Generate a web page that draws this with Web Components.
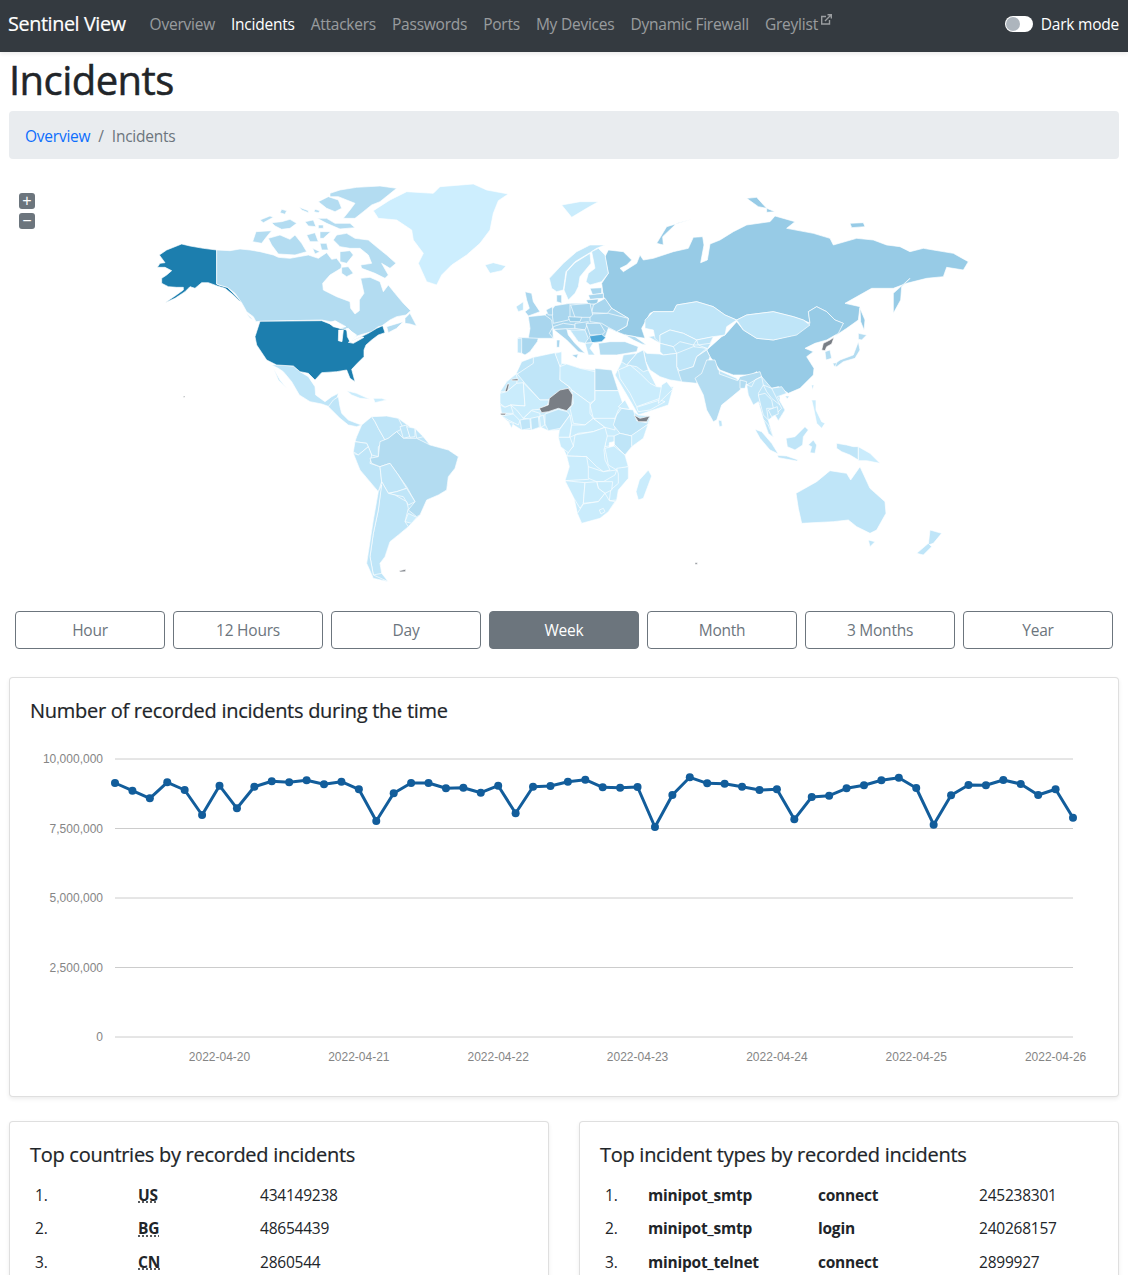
<!DOCTYPE html>
<html lang="en">
<head>
<meta charset="utf-8">
<title>Sentinel View - Incidents</title>
<style>
  html, body { margin: 0; height: 1275px; overflow: hidden; background: #fff; }
  body { font-family: "Open Sans", "Noto Sans", sans-serif; color: #212529; }
  main-area { display: block; padding: 3px 9px 0; }
</style>
</head>
<body>
<app-navbar active="Incidents"></app-navbar>
<main-area>
  <page-title>Incidents</page-title>
  <bread-crumb current="Incidents"></bread-crumb>
  <world-map></world-map>
  <range-buttons active="Week"></range-buttons>
  <panel-card heading="Number of recorded incidents during the time">
    <line-chart></line-chart>
  </panel-card>
  <two-cols>
    <panel-card heading="Top countries by recorded incidents">
      <top-list cols="103px 122px 1fr" rows='[["1.","*US","434149238"],["2.","*BG","48654439"],["3.","*CN","2860544"]]'></top-list>
    </panel-card>
    <panel-card heading="Top incident types by recorded incidents">
      <top-list cols="43px 170px 161px 1fr" rows='[["1.","!minipot_smtp","!connect","245238301"],["2.","!minipot_smtp","!login","240268157"],["3.","!minipot_telnet","!connect","2899927"]]'></top-list>
    </panel-card>
  </two-cols>
</main-area>

<script>
// Open Sans runs wider than the reference face, pull it in a little
const TEXT_FIT = 'font-size: 15.5px; letter-spacing: -0.015em;';

class AppNavbar extends HTMLElement {
  connectedCallback() {
    const links = ['Overview', 'Incidents', 'Attackers', 'Passwords', 'Ports', 'My Devices', 'Dynamic Firewall', 'Greylist'];
    const active = this.getAttribute('active');
    const external = `<svg width="11" height="11" viewBox="0 0 11 11" fill="none" stroke="currentColor" stroke-width="1.4"><path d="M8.5 6v4h-7.800V2.500h4.300"/><path d="M4 7l6-6M6.500 .8h3.800v3.800"/></svg>`;
    this.attachShadow({ mode: 'open' }).innerHTML = `
      <style>
        :host { display: flex; align-items: center; box-sizing: border-box; height: 52px; padding: 0 9px 5px 8px; background: #343a40;
          box-shadow: 0 2px 4px rgba(0,0,0,.08); position: relative; ${TEXT_FIT} }
        .brand { font-size: 19.8px; letter-spacing: -.02em; color: #fff; margin-right: 16px; -webkit-text-stroke: .2px #fff; }
        nav { display: flex; flex: 1; }
        a { color: rgba(255,255,255,.5); padding: 0 8px; text-decoration: none; white-space: nowrap; }
        a.on { color: #fff; }
        a svg { vertical-align: 5px; margin-left: 3px; }
        .toggle { display: flex; align-items: center; gap: 8px; color: #fff; }
        .track { width: 28px; height: 16px; border-radius: 8px; background: #fff; display: flex; align-items: center; padding-left: 1px; box-sizing: border-box; }
        .knob { width: 14px; height: 14px; border-radius: 50%; background: #adb5bd; }
      </style>
      <span class="brand">Sentinel View</span>
      <nav>${links.map(l => `<a href="#" class="${l === active ? 'on' : ''}">${l}${l === 'Greylist' ? external : ''}</a>`).join('')}</nav>
      <label class="toggle"><span class="track"><span class="knob"></span></span>Dark mode</label>`;
  }
}

class PageTitle extends HTMLElement {
  connectedCallback() {
    this.attachShadow({ mode: 'open' }).innerHTML = `
      <style>
        :host { display: block; height: 48px; margin-bottom: 8px; }
        h1 { margin: 0; font-size: 40px; line-height: 50px; font-weight: 400; color: #212529; letter-spacing: -.014em; -webkit-text-stroke: .5px #212529; }
      </style>
      <h1><slot></slot></h1>`;
  }
}

class BreadCrumb extends HTMLElement {
  connectedCallback() {
    this.attachShadow({ mode: 'open' }).innerHTML = `
      <style>
        :host { display: flex; align-items: center; box-sizing: border-box; height: 48px; padding: 1px 16px 0; background: #e9ecef; border-radius: 4px;
          color: #6c757d; ${TEXT_FIT} }
        a { color: #0d6efd; text-decoration: none; }
        i { font-style: normal; padding: 0 8px; }
      </style>
      <a href="#">Overview</a><i>/</i><span>${this.getAttribute('current')}</span>`;
  }
}

// Colours of the choropleth, light to dark
const C = { g: '#cdeefe', l: '#caecfc', m: '#bfe5f8', d: '#b3dcf1', e: '#a9d6ee', f: '#9ccfe9', r: '#97cbe6', b: '#4fa9d9', u: '#1c7eae', x: '#797e85' };

// Each region is traced in 3x crop coordinates, ox/oy is the crop origin on the page.
// A leading "_" on the colour key draws a base with no border under its countries, "w" is a lake.
const REGIONS = [
  { ox: 140, oy: 180, shapes: [
    ['u', '230,210 230,312 240,316 262,322 285,345 305,365 298,362 280,345 255,325 232,318 205,308 185,308 165,325 150,320 135,335 105,355 75,368 105,348 130,330 130,322 110,322 85,320 65,310 65,295 80,285 95,272 75,262 52,262 60,250 75,248 58,225 80,210 125,192 150,198 190,205'],
    ['g', '700,92 750,60 800,35 880,40 900,20 1000,12 1040,30 1105,42 1075,62 1060,100 1050,150 1020,190 980,225 935,255 905,285 890,315 860,305 835,250 850,220 820,180 815,150 770,120 715,115'],
    ['l', '1035,255 1060,248 1098,258 1085,272 1050,280'],
    ['m', '395,555 410,555 460,558 480,575 505,590 525,620 527,645 555,665 575,650 595,640 590,660 568,680 545,672 510,665 478,645 455,605 430,575 415,565'],
    ['m', '400,565 420,600 440,625 415,600'],
    ['m', '565,680 580,660 595,650 600,680 605,700 625,720 650,730 665,735 650,740 625,735 600,715 575,690'],
    ['l', '620,632 650,640 690,658 660,655 635,645'],
    ['l', '700,655 725,655 740,660 705,668'],
    ['_m', '665,735 695,710 775,715 850,770 870,795 925,810 955,830 945,865 925,890 920,930 895,945 860,960 840,1005 815,1030 805,1040 775,1065 750,1085 735,1130 720,1150 725,1180 745,1205 700,1195 680,1150 690,1085 700,1020 715,935 660,870 640,820 645,785 650,770'],
    ['m', '665,735 695,710 705,725 715,745 735,780 725,790 715,800 715,830 695,825 680,790 645,785 650,770'],
    ['m', '695,710 740,708 775,715 790,745 770,755 745,775 735,780 715,745 705,725'],
    ['m', '780,740 800,735 810,770 790,775'],
    ['m', '800,740 825,745 825,770 810,772'],
    ['m', '825,745 850,770 830,775'],
    ['m', '645,785 680,790 685,800 655,825 640,815'],
    ['m', '655,825 685,800 695,825 690,850 720,860 725,905 715,935 660,870 640,820'],
    ['d', '690,835 715,830 720,785 745,775 770,755 790,775 830,775 860,790 870,795 925,810 955,830 945,865 925,890 920,930 895,945 860,960 840,1005 830,1010 805,990 825,965 800,920 775,885 750,850 720,860 695,850'],
    ['m', '720,860 750,850 775,885 800,925 770,935 745,940 725,905'],
    ['m', '745,940 770,935 800,925 825,965 805,975 790,950 765,945'],
    ['l', '805,1000 830,1012 815,1030 795,1025'],
    ['m', '725,905 745,940 765,945 800,965 805,985 795,1025 805,1040 775,1065 750,1085 735,1130 720,1150 725,1180 700,1185 690,1130 700,1060 715,990'],
    ['m', '715,935 725,915 715,990 700,1060 690,1130 700,1185 745,1205 700,1195 680,1150 690,1085 700,1020'],
    ['x', '778,1172 798,1168 796,1175 780,1176'],
    ['x', '130,648 135,648 135,652 130,652']
  ] },
  // canada and the contiguous states
  { ox: 240, oy: 180, shapes: [
    ['d', '-70,210 -30,212 0,207 30,210 60,215 100,225 115,232 150,235 205,225 235,235 260,218 275,238 290,235 305,255 303,265 270,285 248,310 250,330 290,350 330,365 332,385 345,402 358,392 358,360 372,340 362,295 390,292 420,305 430,335 445,315 465,340 490,370 512,392 498,405 470,410 450,420 425,438 415,440 395,455 370,462 345,470 335,480 340,460 325,445 310,450 290,425 270,425 245,420 60,424 48,425 40,410 20,395 5,368 -15,340 -38,322 -60,316 -70,312'],
    ['d', '300,215 330,212 340,225 320,250 300,245'],
    ['d', '270,40 300,30 350,22 420,18 470,25 445,45 420,65 395,75 370,95 345,115 310,115 330,90 345,70 320,60 295,50 270,50'],
    ['d', '235,65 265,50 295,60 305,85 285,95 260,85'],
    ['d', '232,115 260,115 285,130 330,130 345,143 300,147 260,130'],
    ['d', '225,88 240,92 235,98 222,95'],
    ['d', '178,82 205,92 205,98 185,90'],
    ['d', '125,88 140,92 135,103 120,98'],
    ['d', '60,120 90,108 100,112 70,128'],
    ['d', '95,128 125,125 150,118 170,130 150,145 125,148 105,138'],
    ['d', '195,125 220,120 228,140 205,138'],
    ['d', '235,135 250,135 250,145 235,145'],
    ['d', '48,155 95,152 80,170 65,190 38,185'],
    ['d', '85,175 120,165 150,178 165,165 185,190 200,215 165,225 115,222 95,195'],
    ['d', '200,165 225,158 235,185 210,185'],
    ['d', '240,155 272,155 250,175 240,175'],
    ['d', '240,190 260,190 265,210 245,210'],
    ['d', '218,205 240,215 225,222'],
    ['d', '280,180 290,165 320,160 345,175 385,180 415,205 440,225 468,250 450,265 425,250 445,285 435,295 405,280 365,265 362,255 395,250 385,225 360,205 330,205 300,200'],
    ['d', '305,262 325,260 340,280 320,290 305,280'],
    ['d', '495,415 510,400 530,438 510,432 495,430'],
    ['d', '440,440 490,425 470,445 445,458'],
    ['d', '18,398 40,420 30,415'],
    ['u', '60,424 245,422 270,432 300,445 320,450 330,470 330,485 360,472 385,460 410,445 428,437 435,458 415,465 395,480 378,495 372,510 372,530 352,550 335,568 345,605 330,595 320,570 290,575 245,578 225,600 205,580 180,575 160,558 110,555 80,540 50,495 45,470'],
    ['w', '268,430 285,422 318,440 300,445 280,440'],
    ['w', '296,450 310,450 306,485 295,482'],
    ['w', '320,445 350,465 335,480 330,485 322,470'],
    ['w', '325,487 365,470 372,472 340,490']
  ] },
  // russia, central asia and the near east
  { ox: 480, oy: 180, shapes: [
    ['r', '375,230 385,210 430,215 455,240 440,255 420,265 430,275 470,250 480,225 490,240 520,235 580,215 625,205 640,172 668,170 672,195 662,248 682,240 690,192 720,180 760,155 800,135 870,125 885,108 945,125 920,145 1000,160 1050,175 1060,195 1130,175 1180,180 1220,195 1260,200 1290,215 1330,205 1360,210 1420,220 1465,245 1450,270 1400,262 1390,290 1340,295 1280,310 1240,325 1175,325 1095,370 1140,380 1135,420 1100,445 1065,468 1090,430 1065,420 1040,395 1010,380 985,395 990,430 970,420 940,410 880,395 840,400 800,405 770,420 735,405 700,380 650,365 590,375 580,395 520,395 510,400 485,445 495,475 465,470 435,465 410,455 440,438 445,415 395,385 370,350 365,310 385,280'],
    ['r', '1240,340 1290,295 1265,320 1262,360 1240,400'],
    ['r', '1140,385 1155,420 1152,450 1142,425'],
    ['r', '530,190 560,140 636,118 590,130 548,170 550,195'],
    ['r', '800,55 830,52 860,85 835,80'],
    ['r', '860,85 885,95 860,97'],
    ['r', '1110,130 1150,128 1155,140 1115,143'],
    ['l', '245,75 300,65 355,65 320,85 275,112'],
    ['r', '680,510 725,470 735,465 770,425 790,450 830,475 880,480 940,465 985,430 990,430 985,395 1010,380 1040,395 1065,420 1090,430 1075,460 1040,480 1005,490 975,505 1000,515 980,530 1002,565 1000,585 960,625 925,640 895,620 875,625 845,615 845,590 830,575 815,585 760,585 720,570 690,530'],
    ['m', '770,420 800,405 840,400 880,395 940,410 970,420 990,435 950,465 880,480 830,475 790,450'],
    ['_m', '505,470 540,465 570,450 650,480 700,470 690,495 680,510 650,530 640,560 600,605 590,560 550,525 540,490'],
    ['m', '495,420 520,395 580,395 590,375 650,365 700,380 735,405 770,420 740,440 735,465 700,470 650,480 610,460 570,450 540,465 540,490 525,475 520,450 495,445'],
    ['m', '540,465 570,450 610,460 650,480 640,495 600,485 580,500 540,490'],
    ['m', '540,490 580,500 590,520 550,525 540,515'],
    ['m', '650,480 700,470 690,490 655,495'],
    ['m', '640,495 655,495 680,505 650,510'],
    ['m', '590,520 640,500 680,505 650,530 640,560 600,575 590,560'],
    ['d', '590,575 640,560 650,530 680,510 690,530 680,560 655,595 650,610 600,605'],
    ['m', '490,510 500,520 540,522 550,525 590,520 590,560 605,605 570,600 540,590 510,570 497,545'],
    ['m', '948,940 1010,905 1050,872 1100,880 1112,900 1140,860 1170,925 1215,965 1218,1000 1190,1050 1170,1060 1130,1040 1105,1020 1060,1025 965,1030 955,985'],
    ['m', '1165,1080 1185,1085 1170,1100'],
    ['m', '1350,1050 1385,1060 1360,1090 1345,1095'],
    ['m', '1345,1090 1310,1120 1330,1125 1355,1100'],
    ['_l', '425,545 430,525 470,520 490,510 497,545 505,570 530,620 580,620 565,675 475,705 455,670 405,585'],
    ['m', '470,520 490,510 497,545 505,570 490,575 470,560 440,555'],
    ['m', '430,525 470,520 440,555 425,545'],
    ['x', '645,1148 652,1148 652,1153 645,1153']
  ] },
  // europe
  { ox: 510, oy: 240, shapes: [
    ['_e', '60,265 55,230 105,225 135,197 180,190 240,190 305,205 355,235 350,258 320,275 295,265 285,293 275,305 245,308 225,310 205,305 180,270 130,268 128,262 130,295 85,295 75,310'],
    ['m', '118,115 160,70 200,35 240,15 285,15 260,25 240,38 195,65 168,95 160,150 140,155 125,145'],
    ['m', '162,150 170,95 195,68 240,40 243,70 210,110 205,140 195,160 175,180'],
    ['m', '245,35 265,25 285,45 295,100 275,125 240,135 228,125 235,100 255,85'],
    ['e', '240,145 275,143 275,160 248,165'],
    ['e', '235,165 280,160 280,175 240,178'],
    ['f', '228,180 265,177 262,192 235,192'],
    ['e', '250,195 285,175 305,205 292,220 245,218'],
    ['e', '240,222 295,220 355,235 350,258 320,275 295,262 275,250 240,245'],
    ['e', '182,195 240,190 248,225 240,232 195,232'],
    ['e', '125,210 135,197 180,190 180,232 175,240 130,250'],
    ['e', '140,165 155,165 155,190 140,185'],
    ['e', '45,155 65,160 70,185 90,215 55,228 45,215 58,205 50,180'],
    ['m', '18,200 40,185 40,210 25,215'],
    ['e', '108,210 127,200 128,225 115,225'],
    ['e', '55,230 105,225 125,240 128,262 118,280 130,295 85,295 75,310 55,295 60,265'],
    ['e', '25,292 85,295 82,305 60,335 45,345 35,340'],
    ['m', '22,295 35,295 35,340 22,338'],
    ['e', '130,268 170,265 175,285 195,310 225,340 205,335 170,300'],
    ['e', '130,260 160,250 195,255 195,265 130,268'],
    ['f', '175,230 215,232 210,245 180,245'],
    ['e', '195,250 235,245 225,270 195,265'],
    ['m', '180,270 225,270 235,295 225,310 205,305'],
    ['e', '228,250 270,250 285,275 275,285 240,285'],
    ['b', '238,288 275,283 287,293 275,305 245,308'],
    ['m', '225,310 250,308 240,325 255,345 235,345'],
    ['e', '185,345 205,342 200,355'],
    ['e', '140,300 150,300 148,322 140,322'],
    ['d', '265,310 300,305 345,305 385,320 380,335 320,345 270,345'],
    ['d', '345,285 375,290 410,315 395,312 370,300']
  ] },
  // africa and arabia
  { ox: 490, oy: 350, shapes: [
    ['_l', '78,72 95,35 130,22 195,8 215,5 215,40 230,42 270,55 315,60 365,60 385,122 400,165 420,178 445,195 482,198 460,265 425,290 405,315 415,350 415,385 385,420 380,450 355,485 330,505 275,520 262,490 252,445 225,392 238,350 230,318 205,262 208,240 175,242 152,232 125,240 95,240 55,215 35,198 30,165 30,130 50,95'],
    ['m', '78,72 95,35 130,22 140,40 105,65'],
    ['l', '30,125 50,95 78,72 82,85 80,100 50,125'],
    ['x', '45,125 52,102 58,102 52,125'],
    ['x', '65,88 84,86 84,92 66,92'],
    ['l', '30,160 30,130 50,125 80,100 100,98 105,168 62,165 45,172'],
    ['m', '82,72 130,40 130,22 195,8 212,50 210,90 240,112 200,130 175,150 150,150 105,100'],
    ['l', '195,10 215,5 215,40 210,50'],
    ['l', '210,50 230,42 270,55 315,65 315,150 300,160 245,120 240,112 210,90'],
    ['d', '315,55 365,60 385,122 315,122'],
    ['l', '315,122 385,122 400,165 385,180 375,205 345,212 310,205 300,165 315,150'],
    ['l', '245,120 300,160 300,190 310,205 285,225 250,220 240,175 250,160'],
    ['l', '100,98 150,150 178,150 172,165 148,178 125,180 100,205 80,180 62,165 105,168'],
    ['l', '30,165 45,172 62,165 70,190 35,190'],
    ['x', '32,190 48,190 46,195 32,195'],
    ['l', '35,198 70,192 90,212 85,225 55,210'],
    ['l', '55,215 70,220 65,235'],
    ['m', '90,210 120,205 122,235 95,240'],
    ['l', '100,205 125,182 150,190 150,200 122,207'],
    ['m', '122,205 145,200 148,232 125,240'],
    ['l', '148,200 160,195 165,225 152,232'],
    ['m', '165,192 205,178 232,185 240,195 210,235 175,242 165,222'],
    ['x', '148,175 175,165 178,145 210,120 235,115 248,135 245,165 230,182 205,175 175,185 155,188'],
    ['l', '240,195 245,225 238,262 205,262 208,240'],
    ['l', '245,225 285,225 310,205 345,232 310,245 265,250 240,262'],
    ['l', '310,205 375,205 375,240 345,232'],
    ['m', '395,175 430,180 440,212 478,220 425,258 390,250 370,225 380,195'],
    ['l', '385,170 405,150 420,178 395,175'],
    ['l', '482,200 460,265 425,290 422,258 478,220'],
    ['x', '432,195 450,205 480,198 470,215 445,215'],
    ['m', '390,250 425,258 425,290 405,315 372,282 372,258'],
    ['l', '348,258 372,258 372,285 345,290'],
    ['w', '358,278 372,275 372,292 358,292'],
    ['l', '345,295 372,288 405,315 415,350 380,360 355,345'],
    ['l', '255,255 310,245 345,232 352,258 342,300 345,330 360,360 340,365 320,350 290,320 230,318 238,300 250,290'],
    ['l', '205,262 240,262 250,288 235,308 212,290'],
    ['l', '230,318 290,320 295,350 320,370 295,388 225,392 238,350'],
    ['l', '295,350 340,365 380,360 375,375 340,395 320,395 295,385'],
    ['l', '380,355 415,350 415,385 385,420 380,450 358,452 362,420 385,400 385,372'],
    ['l', '320,395 345,395 368,395 365,420 345,430 325,415'],
    ['l', '225,392 285,398 280,460 270,475 252,445'],
    ['l', '285,398 320,395 325,415 345,430 325,455 280,460'],
    ['l', '270,478 280,462 325,455 345,430 358,452 375,455 355,485 330,505 275,520 262,490'],
    ['l', '328,480 340,475 345,485 333,492'],
    ['l', '475,360 485,378 460,445 445,450 438,425 448,390'],
    ['l', '385,60 420,45 450,70 480,100 500,110 545,115 510,145 440,170 420,130 390,85'],
    ['l', '440,172 510,150 525,155 480,180 445,185'],
    ['l', '515,105 530,95 548,118 505,160']
  ] },
  // south and east asia
  { ox: 690, oy: 330, shapes: [
    ['d', '25,165 15,145 35,130 50,90 75,90 85,120 145,150 150,140 170,135 210,125 215,140 195,150 185,170 165,160 150,180 120,205 95,225 80,270 70,275 50,240 40,195'],
    ['m', '88,122 140,145 143,152 88,132'],
    ['d', '150,150 170,155 165,175 150,175'],
    ['_m', '170,165 195,150 215,140 245,175 290,190 262,200 285,240 265,272 255,255 235,270 250,322 235,310 220,268 205,215 190,225 175,195'],
    ['m', '170,165 185,170 195,150 215,140 220,165 205,190 215,230 222,240 205,215 190,225 175,195'],
    ['m', '205,195 225,190 245,210 250,235 230,235 235,270 220,255 212,225'],
    ['m', '220,165 245,175 270,200 270,225 245,205 230,185'],
    ['m', '245,175 275,170 290,190 262,200 285,240 265,272 255,255 275,235'],
    ['m', '235,240 262,230 265,252 245,260'],
    ['m', '220,268 235,285 250,322 235,310'],
    ['x', '395,60 400,40 420,30 432,22 425,42 410,50 405,62'],
    ['d', '405,65 420,60 425,85 408,90'],
    ['d', '430,105 450,90 490,75 505,35 510,60 495,85 460,95 440,110'],
    ['d', '505,10 530,15 515,30 505,28'],
    ['d', '428,100 440,98 435,112'],
    ['m', '285,198 298,198 292,207'],
    ['m', '365,165 372,165 367,180'],
    ['l', '365,210 378,210 378,240 395,275 405,280 395,295 380,280 372,240'],
    ['m', '195,298 215,305 245,340 265,372 240,360 210,325'],
    ['m', '262,376 290,378 325,390 320,393 265,383'],
    ['m', '288,325 315,320 345,290 355,300 340,320 338,345 315,360 292,350'],
    ['m', '355,345 370,330 380,345 375,370 360,368 365,350'],
    ['m', '440,340 470,345 490,350 505,350 505,390 480,375 455,365 440,355'],
    ['l', '505,350 540,370 570,400 530,392 505,392'],
    ['m', '85,270 95,272 97,288 88,290']
  ] }
];

class WorldMap extends HTMLElement {
  connectedCallback() {
    const poly = ([c, pts]) => {
      if (c === 'w') return `<polygon points="${pts}" fill="#fff" stroke="none"/>`;
      if (c[0] === '_') return `<polygon points="${pts}" fill="${C[c[1]]}" stroke="none"/>`;
      return `<polygon points="${pts}" fill="${C[c]}"/>`;
    };
    this.attachShadow({ mode: 'open' }).innerHTML = `
      <style>
        :host { display: block; position: relative; height: 452px; }
        svg { display: block; }
        polygon { stroke: #fff; stroke-width: 2; stroke-linejoin: round; }
        .zoom { position: absolute; left: 10px; top: 34px; display: flex; flex-direction: column; gap: 4px; }
        .zoom b { width: 16px; height: 16px; border-radius: 3px; background: #6c757d; color: #fff; font: 400 16px/16px "Liberation Sans", sans-serif; text-align: center; }
      </style>
      <svg width="1110" height="452" viewBox="9 159 1110 452">
        ${REGIONS.map(r => `<g transform="translate(${r.ox} ${r.oy}) scale(.33333)">${r.shapes.map(poly).join('')}</g>`).join('')}
      </svg>
      <div class="zoom"><b>+</b><b>−</b></div>`;
  }
}

class RangeButtons extends HTMLElement {
  connectedCallback() {
    const items = ['Hour', '12 Hours', 'Day', 'Week', 'Month', '3 Months', 'Year'];
    const active = this.getAttribute('active');
    this.attachShadow({ mode: 'open' }).innerHTML = `
      <style>
        :host { display: grid; grid-template-columns: repeat(7, 150px); gap: 8px; padding: 0 6px; margin-bottom: 28px; }
        button { height: 38px; background: #fff; border: 1px solid #6c757d; border-radius: 4px; color: #6c757d; font-family: inherit; ${TEXT_FIT} padding: 0; }
        button.on { background: #6c757d; color: #fff; }
      </style>
      ${items.map(i => `<button class="${i === active ? 'on' : ''}">${i}</button>`).join('')}`;
  }
}

class PanelCard extends HTMLElement {
  connectedCallback() {
    this.attachShadow({ mode: 'open' }).innerHTML = `
      <style>
        :host { display: block; box-sizing: border-box; padding: 20px; background: #fff; border: 1px solid rgba(0,0,0,.125); border-radius: 4px;
          box-shadow: 0 2px 4px rgba(0,0,0,.075); margin-bottom: 24px; }
        h5 { margin: 1px 0 7px; font-size: 20px; line-height: 24px; font-weight: 400; color: #212529; letter-spacing: -.014em; -webkit-text-stroke: .2px #212529; }
      </style>
      <h5>${this.getAttribute('heading')}</h5>
      <slot></slot>`;
  }
}

class TwoCols extends HTMLElement {
  connectedCallback() {
    this.attachShadow({ mode: 'open' }).innerHTML = `
      <style>:host { display: grid; grid-template-columns: 540px 540px; gap: 30px; }</style>
      <slot></slot>`;
  }
}

// y position of each 3-hour sample, on the pixel grid of the plot
const SAMPLES = [783,790.7,798.3,782.3,790,815,785.7,808.3,786.7,781.3,782.3,780.3,784.3,781.7,789.3,821,793.3,783,783,788.3,787.7,792.7,785.7,813.3,786.7,786,
  781.7,779.7,787.3,787.7,787,827,795,777.3,783.3,783.7,786.7,790,789.3,819.3,797,795.7,788.3,785.3,780.3,777.7,788,824.7,795.3,785,785.3,780,784,795,789.3,817.7];

class LineChart extends HTMLElement {
  connectedCallback() {
    const x = i => 115 + i * 958 / 55;
    const yLabels = [[759, '10,000,000'], [828.5, '7,500,000'], [898, '5,000,000'], [967.5, '2,500,000'], [1037, '0']];
    const days = ['20', '21', '22', '23', '24', '25', '26'];
    this.attachShadow({ mode: 'open' }).innerHTML = `
      <style>
        :host { display: block; height: 346px; }
        svg { display: block; font: 12px "Liberation Sans", Arial, sans-serif; fill: #858585; }
      </style>
      <svg width="1068" height="346" viewBox="30 730 1068 346">
        ${yLabels.map(([y, t]) => `<line x1="115" x2="1073" y1="${y}" y2="${y}" stroke="#ccc"/>
          <text x="103" y="${y + 4}" text-anchor="end">${t}</text>`).join('')}
        ${days.map((d, i) => `<text x="${x(6 + i * 8)}" y="1061" text-anchor="middle">2022-04-${d}</text>`).join('')}
        <polyline fill="none" stroke="#125d9b" stroke-width="3" stroke-linejoin="round" points="${SAMPLES.map((y, i) => `${x(i)},${y}`).join(' ')}"/>
        ${SAMPLES.map((y, i) => `<circle cx="${x(i)}" cy="${y}" r="4" fill="#125d9b"/>`).join('')}
      </svg>`;
  }
}

class TopList extends HTMLElement {
  connectedCallback() {
    const rows = JSON.parse(this.getAttribute('rows'));
    const cell = c => {
      if (c[0] === '*') return `<abbr>${c.slice(1)}</abbr>`;
      if (c[0] === '!') return `<b>${c.slice(1)}</b>`;
      return `<span>${c}</span>`;
    };
    this.attachShadow({ mode: 'open' }).innerHTML = `
      <style>
        :host { display: block; padding-top: 4px; ${TEXT_FIT} }
        .row { display: grid; grid-template-columns: ${this.getAttribute('cols')}; height: 33.5px; align-items: center; padding-left: 5px; }
        b, abbr { font-weight: 700; }
        abbr { text-decoration: underline dotted; }
      </style>
      ${rows.map(r => `<div class="row">${r.map(cell).join('')}</div>`).join('')}`;
  }
}

customElements.define('app-navbar', AppNavbar);
customElements.define('page-title', PageTitle);
customElements.define('bread-crumb', BreadCrumb);
customElements.define('world-map', WorldMap);
customElements.define('range-buttons', RangeButtons);
customElements.define('panel-card', PanelCard);
customElements.define('two-cols', TwoCols);
customElements.define('line-chart', LineChart);
customElements.define('top-list', TopList);
</script>
</body>
</html>
